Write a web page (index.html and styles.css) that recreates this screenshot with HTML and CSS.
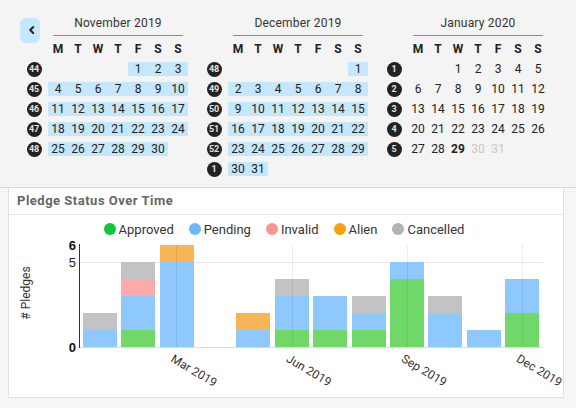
FILE: index.html
```html
<!DOCTYPE html>
<html>
<head>
<meta charset="utf-8">
<title>Pledges</title>
<link rel="stylesheet" href="styles.css">
</head>
<body>
<section class="calendars">
  <div class="month">
    <div class="mhead">
      <div class="wkcol"><button class="back" aria-label="Previous"><svg width="20" height="25" viewBox="0 0 20 25"><path d="M13.2 9 L10.2 12 L13.2 15" fill="none" stroke="#222" stroke-width="2" stroke-linecap="round" stroke-linejoin="round"/></svg></button></div>
      <div class="title">November 2019</div>
    </div>
    <div class="grid">
      <span></span><span class="dow">M</span><span class="dow">T</span><span class="dow">W</span><span class="dow">T</span><span class="dow">F</span><span class="dow">S</span><span class="dow">S</span>
      <span class="wk"><i>44</i></span><span class="d"></span><span class="d"></span><span class="d"></span><span class="d"></span><span class="d on">1</span><span class="d on">2</span><span class="d on">3</span>
      <span class="wk"><i>45</i></span><span class="d on">4</span><span class="d on">5</span><span class="d on">6</span><span class="d on">7</span><span class="d on">8</span><span class="d on">9</span><span class="d on">10</span>
      <span class="wk"><i>46</i></span><span class="d on">11</span><span class="d on">12</span><span class="d on">13</span><span class="d on">14</span><span class="d on">15</span><span class="d on">16</span><span class="d on">17</span>
      <span class="wk"><i>47</i></span><span class="d on">18</span><span class="d on">19</span><span class="d on">20</span><span class="d on">21</span><span class="d on">22</span><span class="d on">23</span><span class="d on">24</span>
      <span class="wk"><i>48</i></span><span class="d on">25</span><span class="d on">26</span><span class="d on">27</span><span class="d on">28</span><span class="d on">29</span><span class="d on">30</span><span class="d"></span>
    </div>
  </div>
  <div class="month">
    <div class="mhead">
      <div class="wkcol"></div>
      <div class="title">December 2019</div>
    </div>
    <div class="grid">
      <span></span><span class="dow">M</span><span class="dow">T</span><span class="dow">W</span><span class="dow">T</span><span class="dow">F</span><span class="dow">S</span><span class="dow">S</span>
      <span class="wk"><i>48</i></span><span class="d"></span><span class="d"></span><span class="d"></span><span class="d"></span><span class="d"></span><span class="d"></span><span class="d on">1</span>
      <span class="wk"><i>49</i></span><span class="d on">2</span><span class="d on">3</span><span class="d on">4</span><span class="d on">5</span><span class="d on">6</span><span class="d on">7</span><span class="d on">8</span>
      <span class="wk"><i>50</i></span><span class="d on">9</span><span class="d on">10</span><span class="d on">11</span><span class="d on">12</span><span class="d on">13</span><span class="d on">14</span><span class="d on">15</span>
      <span class="wk"><i>51</i></span><span class="d on">16</span><span class="d on">17</span><span class="d on">18</span><span class="d on">19</span><span class="d on">20</span><span class="d on">21</span><span class="d on">22</span>
      <span class="wk"><i>52</i></span><span class="d on">23</span><span class="d on">24</span><span class="d on">25</span><span class="d on">26</span><span class="d on">27</span><span class="d on">28</span><span class="d on">29</span>
      <span class="wk"><i>1</i></span><span class="d on">30</span><span class="d on">31</span><span class="d"></span><span class="d"></span><span class="d"></span><span class="d"></span><span class="d"></span>
    </div>
  </div>
  <div class="month">
    <div class="mhead">
      <div class="wkcol"></div>
      <div class="title">January 2020</div>
    </div>
    <div class="grid">
      <span></span><span class="dow">M</span><span class="dow">T</span><span class="dow">W</span><span class="dow">T</span><span class="dow">F</span><span class="dow">S</span><span class="dow">S</span>
      <span class="wk"><i>1</i></span><span class="d"></span><span class="d"></span><span class="d">1</span><span class="d">2</span><span class="d">3</span><span class="d">4</span><span class="d">5</span>
      <span class="wk"><i>2</i></span><span class="d">6</span><span class="d">7</span><span class="d">8</span><span class="d">9</span><span class="d">10</span><span class="d">11</span><span class="d">12</span>
      <span class="wk"><i>3</i></span><span class="d">13</span><span class="d">14</span><span class="d">15</span><span class="d">16</span><span class="d">17</span><span class="d">18</span><span class="d">19</span>
      <span class="wk"><i>4</i></span><span class="d">20</span><span class="d">21</span><span class="d">22</span><span class="d">23</span><span class="d">24</span><span class="d">25</span><span class="d">26</span>
      <span class="wk"><i>5</i></span><span class="d">27</span><span class="d">28</span><span class="d today">29</span><span class="d future">30</span><span class="d future">31</span><span class="d"></span><span class="d"></span>
    </div>
  </div>
</section>
<section class="lower">
  <div class="card">
    <div class="card-head">Pledge Status Over Time</div>
    <div class="legend">
      <span class="li"><span class="dot approved"></span>Approved</span>
      <span class="li"><span class="dot pending"></span>Pending</span>
      <span class="li"><span class="dot invalid"></span>Invalid</span>
      <span class="li"><span class="dot alien"></span>Alien</span>
      <span class="li"><span class="dot cancelled"></span>Cancelled</span>
    </div>
    <svg class="plot" viewBox="9 243 554 154" width="554" height="154">
      <line class="grid-h" x1="80" y1="262.5" x2="543" y2="262.5"/>
      <g class="bars">
        <rect class="b-pen" x="83" y="330" width="34" height="17"/>
        <rect class="b-can" x="83" y="313" width="34" height="17"/>

        <rect class="b-app" x="121" y="330" width="34" height="17"/>
        <rect class="b-pen" x="121" y="296" width="34" height="34"/>
        <rect class="b-inv" x="121" y="279" width="34" height="17"/>
        <rect class="b-can" x="121" y="262" width="34" height="17"/>

        <rect class="b-pen" x="160" y="262" width="34" height="85"/>
        <rect class="b-ali" x="160" y="245" width="34" height="17"/>

        <rect class="b-pen" x="236" y="330" width="34" height="17"/>
        <rect class="b-ali" x="236" y="313" width="34" height="17"/>

        <rect class="b-app" x="275" y="330" width="34" height="17"/>
        <rect class="b-pen" x="275" y="296" width="34" height="34"/>
        <rect class="b-can" x="275" y="279" width="34" height="17"/>

        <rect class="b-app" x="313" y="330" width="34" height="17"/>
        <rect class="b-pen" x="313" y="296" width="34" height="34"/>

        <rect class="b-app" x="352" y="330" width="34" height="17"/>
        <rect class="b-pen" x="352" y="313" width="34" height="17"/>
        <rect class="b-can" x="352" y="296" width="34" height="17"/>

        <rect class="b-app" x="390" y="279" width="34" height="68"/>
        <rect class="b-pen" x="390" y="262" width="34" height="17"/>

        <rect class="b-pen" x="428" y="313" width="34" height="34"/>
        <rect class="b-can" x="428" y="296" width="34" height="17"/>

        <rect class="b-pen" x="467" y="330" width="34" height="17"/>

        <rect class="b-app" x="505" y="313" width="34" height="34"/>
        <rect class="b-pen" x="505" y="279" width="34" height="34"/>
      </g>
      <g class="grid-v">
        <line x1="176.5" y1="245" x2="176.5" y2="347"/>
        <line x1="292.5" y1="245" x2="292.5" y2="347"/>
        <line x1="407.5" y1="245" x2="407.5" y2="347"/>
        <line x1="522.5" y1="245" x2="522.5" y2="347"/>
      </g>
      <line class="base" x1="80" y1="347.5" x2="543" y2="347.5"/>
      <line class="axis" x1="79.5" y1="244" x2="79.5" y2="348"/>
      <text class="ytick strong" x="76" y="249.7">6</text>
      <text class="ytick" x="76" y="266.5">5</text>
      <text class="ytick strong" x="76" y="351.7">0</text>
      <text class="ylabel" transform="translate(29.5,293) rotate(-90)">#&#160;Pledges</text>
      <text class="xtick" transform="translate(170,361) rotate(31)">Mar 2019</text>
      <text class="xtick" transform="translate(285.5,361) rotate(31)">Jun 2019</text>
      <text class="xtick" transform="translate(400.5,361) rotate(31)">Sep 2019</text>
      <text class="xtick" transform="translate(515.5,361) rotate(31)">Dec 2019</text>
    </svg>
  </div>
</section>
</body>
</html>
```

FILE: styles.css
```css
* {
  box-sizing: border-box;
  margin: 0;
  padding: 0;
}

html, body {
  width: 576px;
  height: 408px;
  overflow: hidden;
}

body {
  background: #f6f6f6;
  font-family: Roboto, "Noto Sans", sans-serif;
  color: #222;
}

/* ---------- calendars ---------- */
.calendars {
  display: flex;
  gap: 12px;
  height: 188px;
  padding: 12px 0 0 20px;
  background: #f4f4f4;
  border-bottom: 1px solid #d8d8d8;
}

.month {
  width: 168px;
  flex: none;
}

.mhead {
  display: flex;
  align-items: flex-start;
  height: 24px;
}

.wkcol {
  width: 28px;
  flex: none;
}

.back {
  display: block;
  width: 20px;
  height: 25px;
  margin-top: 6px;
  border: none;
  border-radius: 6px;
  background: #c5e7fb;
  cursor: pointer;
}

.back svg {
  display: block;
}

.title {
  width: 130px;
  margin: 0 5px;
  height: 24px;
  line-height: 23px;
  border-bottom: 1px solid #8c8c8c;
  text-align: center;
  font-size: 12px;
  color: #333;
  letter-spacing: 0.2px;
}

.grid {
  display: grid;
  grid-template-columns: 28px repeat(7, 20px);
  grid-auto-rows: 20px;
  margin-top: 3px;
  font-size: 12px;
}

.dow {
  font-weight: 700;
  text-align: center;
  line-height: 20px;
  color: #222;
}

.wk {
  display: flex;
  align-items: center;
  justify-content: center;
}

.wk i {
  display: block;
  width: 15px;
  height: 15px;
  border-radius: 50%;
  background: #222;
  color: #e4e4e4;
  font-style: normal;
  font-size: 9px;
  font-weight: 700;
  line-height: 15px;
  text-align: center;
  letter-spacing: -0.2px;
}

.d {
  height: 20px;
  padding: 3px 0;
  line-height: 14px;
  text-align: center;
  color: #222;
}

.d.on {
  background: #c5e7fb;
  background-clip: content-box;
}

.d.today {
  font-weight: 700;
}

.d.future {
  color: #c8c8c8;
}

/* ---------- chart card ---------- */
.lower {
  padding-left: 8px;
}

.card {
  display: flex;
  flex-direction: column;
  width: 556px;
  height: 210px;
  background: #fff;
  border: 1px solid #e0e0e0;
  border-top: none;
}

.card-head {
  height: 27px;
  padding-left: 8px;
  border-bottom: 1px solid #e6e6e6;
  font-size: 13px;
  font-weight: 700;
  line-height: 26px;
  letter-spacing: 0.5px;
  color: #666;
}

.legend {
  display: flex;
  justify-content: center;
  align-items: center;
  gap: 15px;
  height: 28px;
  padding-right: 4px;
  font-size: 13px;
  color: #333;
}

.li {
  display: flex;
  align-items: center;
  gap: 3px;
}

.dot {
  width: 12px;
  height: 12px;
  border-radius: 50%;
}

.dot.approved { background: #0fc83a; }
.dot.pending { background: #6cb8f7; }
.dot.invalid { background: #ff9494; }
.dot.alien { background: #f5a10c; }
.dot.cancelled { background: #b3b3b3; }

.plot {
  display: block;
  overflow: visible;
}

.b-app { fill: #6fd868; }
.b-pen { fill: #8ec8fc; }
.b-inv { fill: #ffaaaa; }
.b-ali { fill: #f7b555; }
.b-can { fill: #c3c3c3; }

.grid-h {
  stroke: #e6e6e6;
  stroke-width: 1;
}

.grid-v line {
  stroke: rgba(0, 0, 0, 0.07);
  stroke-width: 1;
}

.base {
  stroke: #dddddd;
  stroke-width: 1;
}

.axis {
  stroke: #333;
  stroke-width: 1;
}

.ytick {
  font-family: "Liberation Sans", Arial, sans-serif;
  font-size: 13px;
  text-anchor: end;
  fill: #222;
}

.ytick.strong {
  font-weight: 700;
  fill: #111;
}

.ylabel {
  font-family: Roboto, "Noto Sans", sans-serif;
  font-size: 12px;
  text-anchor: middle;
  fill: #333;
}

.xtick {
  font-family: Roboto, "Noto Sans", sans-serif;
  font-size: 12px;
  fill: #333;
}
```
